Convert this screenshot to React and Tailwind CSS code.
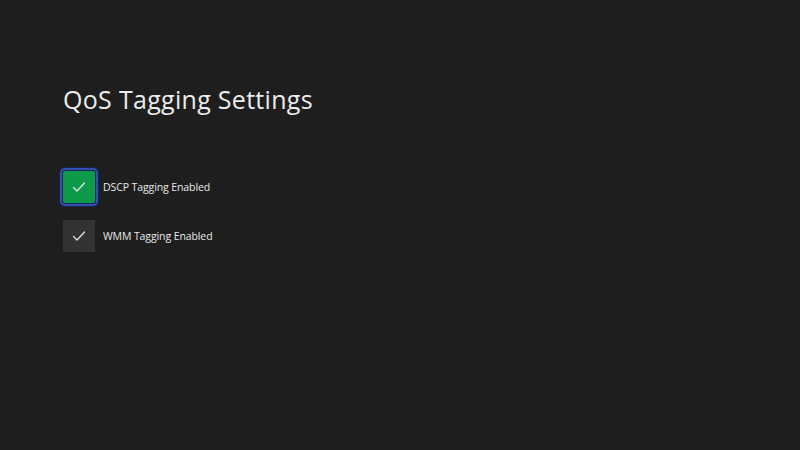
import { useState } from 'react';

const OPTIONS = [
  { id: 'dscp', label: 'DSCP Tagging Enabled', checked: true },
  { id: 'wmm', label: 'WMM Tagging Enabled', checked: false },
];

function CheckIcon() {
  return (
    <svg width="14" height="14" viewBox="0 0 14 14" fill="none">
      <path d="M1.5 7.5 L5 11 L12.5 3" stroke="#e8e8e8" strokeWidth="1.2" strokeLinecap="round" strokeLinejoin="round" />
    </svg>
  );
}

export default function App() {
  const [opts, setOpts] = useState(OPTIONS);
  const [focused] = useState('dscp');

  const toggle = (id) =>
    setOpts((o) => o.map((x) => (x.id === id ? { ...x, checked: !x.checked } : x)));

  return (
    <div className="w-[800px] h-[450px] bg-[#1e1e1e] text-[#e6e6e6] font-['Open_Sans',sans-serif] px-[63px] pt-[80px]">
      <h1 className="text-[25px] leading-[38px] tracking-[0.3px] text-[#ececec]">QoS Tagging Settings</h1>

      <div className="mt-[53px] flex flex-col gap-[17px]">
        {opts.map((o) => (
          <div key={o.id} className="flex items-center gap-[8px] cursor-pointer" onClick={() => toggle(o.id)}>
            <div
              className={
                o.id === focused
                  ? 'w-[32px] h-[32px] flex items-center justify-center rounded-[2px] shadow-[0_0_0_1px_#162660,0_0_0_3px_#3450ad,0_0_0_4px_#18244f] ' +
                    (o.checked ? 'bg-[#0e9a4a]' : 'bg-[#333]')
                  : 'w-[32px] h-[32px] flex items-center justify-center ' + (o.checked ? 'bg-[#0e9a4a]' : 'bg-[#333333]')
              }
            >
              <CheckIcon />
            </div>
            <span className="text-[10.5px] text-[#e8e8e8] tracking-[-0.1px] pt-[1px]">{o.label}</span>
          </div>
        ))}
      </div>
    </div>
  );
}
